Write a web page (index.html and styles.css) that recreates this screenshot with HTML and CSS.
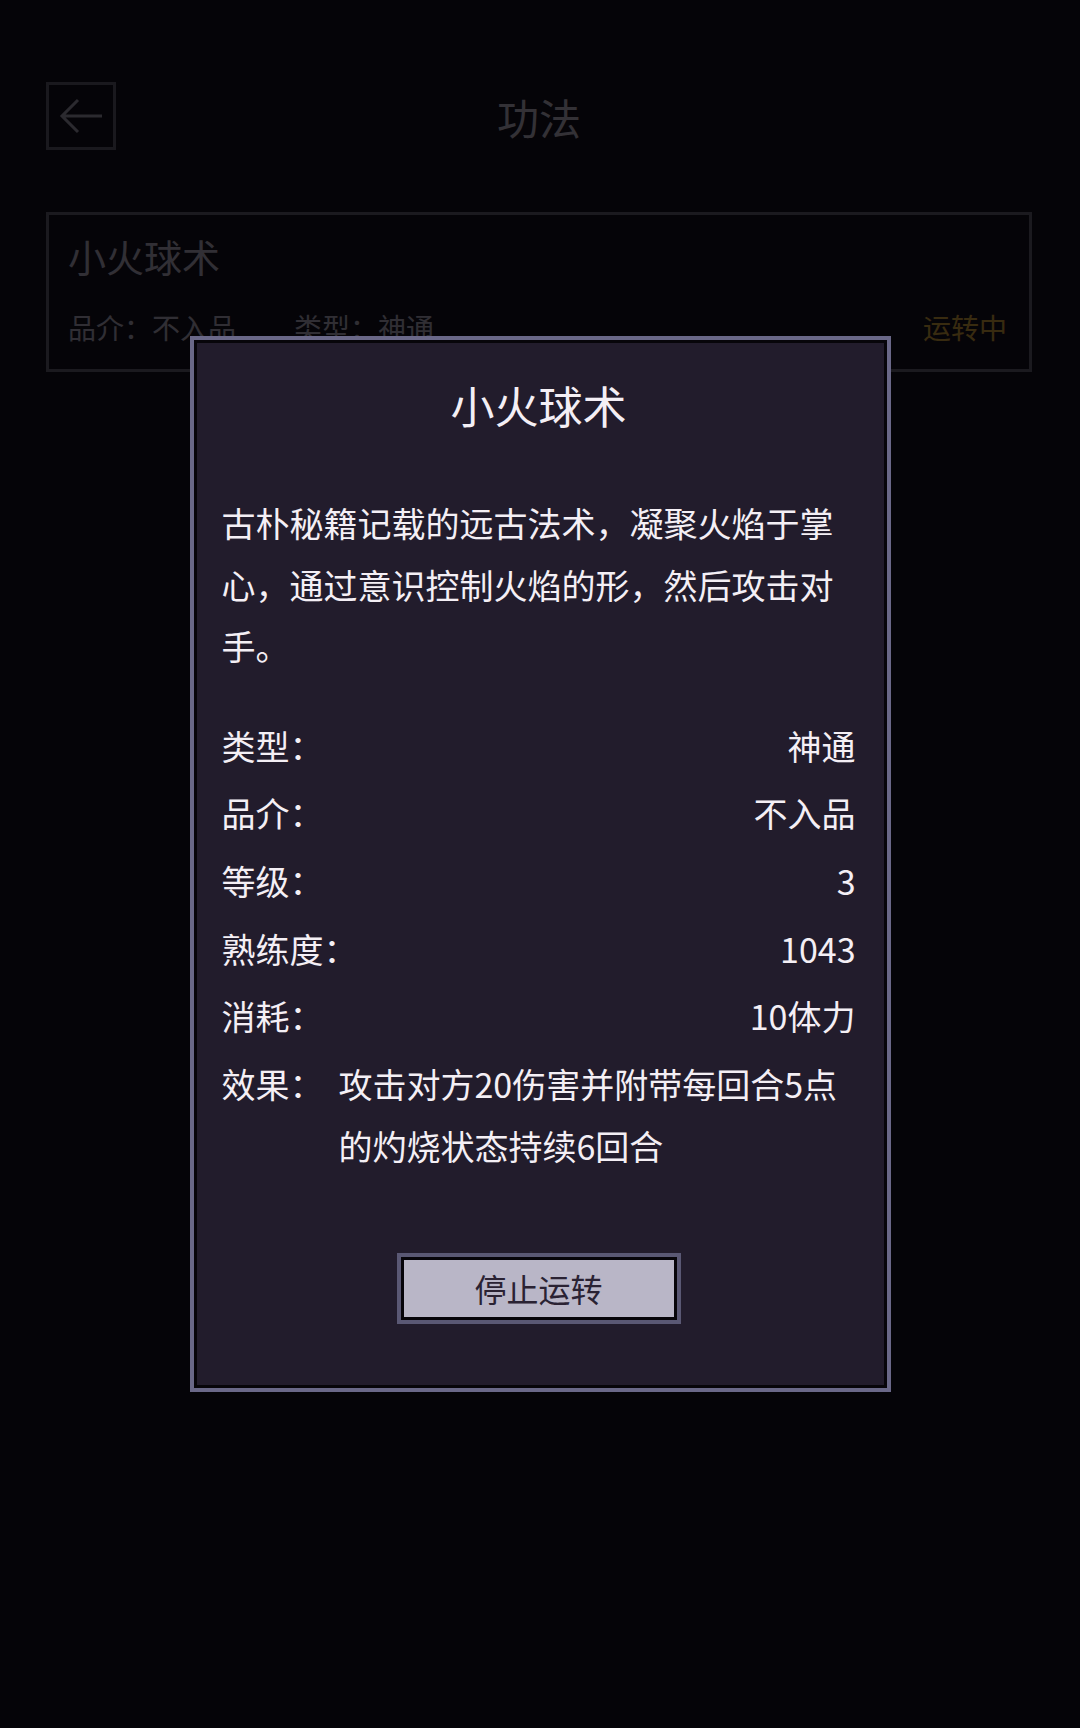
FILE: index.html
```html
<!DOCTYPE html>
<html lang="zh-CN">
<head>
    <meta charset="UTF-8">
    <meta name="viewport" content="width=device-width, initial-scale=1.0">
    <title>功法</title>
    <link rel="stylesheet" href="styles.css">
</head>
<body>
    <div class="page">
        <div class="header">
            <div class="back">
                <svg width="50" height="44" viewBox="0 0 50 44">
                    <path d="M46 22 H6 M22 6 L6 22 L22 38" fill="none" stroke="currentColor" stroke-width="3"/>
                </svg>
            </div>
            <h1>功法</h1>
        </div>

        <div class="card">
            <div class="card-title">小火球术</div>
            <div class="card-info">
                <span class="tag">品介：不入品</span>
                <span class="tag">类型：神通</span>
                <span class="state">运转中</span>
            </div>
        </div>
    </div>

    <div class="mask">
        <div class="modal">
            <h2>小火球术</h2>
            <p class="desc">古朴秘籍记载的远古法术，凝聚火焰于掌心，通过意识控制火焰的形，然后攻击对手。</p>

            <div class="rows">
                <div class="row"><span>类型：</span><span>神通</span></div>
                <div class="row"><span>品介：</span><span>不入品</span></div>
                <div class="row"><span>等级：</span><span>3</span></div>
                <div class="row"><span>熟练度：</span><span>1043</span></div>
                <div class="row"><span>消耗：</span><span>10体力</span></div>
                <div class="row effect"><span class="label">效果：</span><span class="text">攻击对方20伤害并附带每回合5点的灼烧状态持续6回合</span></div>
            </div>

            <div class="actions">
                <button>停止运转</button>
            </div>
        </div>
    </div>
</body>
</html>
```

FILE: styles.css
```css
* {
    box-sizing: border-box;
}
body {
    margin: 0;
    background: #0b090f;
    font-family: "Noto Sans CJK SC", "Noto Sans", sans-serif;
    color: #f4eff5;
    height: 1728px;
    overflow: hidden;
}
.page {
    padding: 82px 48px 0 46px;
}
.header {
    display: flex;
    align-items: center;
    height: 68px;
}
.back {
    width: 70px;
    height: 68px;
    border: 3px solid #6a6874;
    display: flex;
    align-items: center;
    justify-content: center;
    color: #b8b6c0;
}
.header h1 {
    flex: 1;
    margin: 0 70px 0 0;
    text-align: center;
    font-size: 42px;
    font-weight: 400;
    color: #d8d6de;
}
.card {
    margin-top: 62px;
    height: 160px;
    border: 3px solid #6e6c78;
    padding: 18px 22px 0 19px;
}
.card-title {
    font-size: 38px;
    line-height: 46px;
    color: #d0ced8;
}
.card-info {
    display: flex;
    align-items: center;
    margin-top: 28px;
    font-size: 28px;
    color: #cccad4;
}
.tag {
    width: 226px;
}
.state {
    margin-left: auto;
    color: #f0bc34;
}

.mask {
    position: fixed;
    inset: 0;
    background: rgba(4, 3, 7, 0.78);
    display: flex;
    align-items: center;
    justify-content: center;
}
.modal {
    width: 701px;
    background: #221c2c;
    border: 4px solid #6a6888;
    box-shadow: inset 0 0 0 3px #07050a;
    padding: 35px 31px 64px 28px;
}
.modal h2 {
    margin: 0;
    text-align: center;
    font-size: 44px;
    font-weight: 400;
    line-height: 60px;
}
.desc {
    margin: 57px 0 0;
    font-size: 34px;
    line-height: 61.5px;
}
.rows {
    margin-top: 38px;
    display: flex;
    flex-direction: column;
    gap: 5.6px;
}
.row {
    display: flex;
    justify-content: space-between;
    font-size: 34px;
    line-height: 62px;
}
.row.effect {
    justify-content: flex-start;
}
.effect .label {
    flex: none;
    width: 117px;
}
.effect .text {
    flex: 1;
}
.actions {
    margin-top: 76px;
    display: flex;
    justify-content: center;
}
button {
    width: 284px;
    height: 71px;
    background: #b9b6c7;
    border: 4px solid #5a5874;
    box-shadow: inset 0 0 0 3px #07050a;
    font-family: "Noto Sans CJK SC", sans-serif;
    font-size: 32px;
    color: #2a2233;
    padding: 0;
}
```
